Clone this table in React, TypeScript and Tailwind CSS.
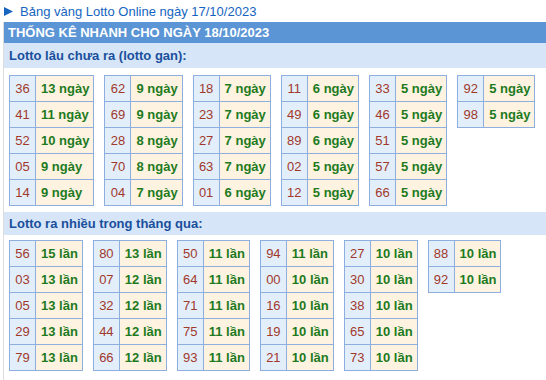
import React from "react";

const gan: [string, string][][] = [
  [["36", "13 ngày"], ["41", "11 ngày"], ["52", "10 ngày"], ["05", "9 ngày"], ["14", "9 ngày"]],
  [["62", "9 ngày"], ["69", "9 ngày"], ["28", "8 ngày"], ["70", "8 ngày"], ["04", "7 ngày"]],
  [["18", "7 ngày"], ["23", "7 ngày"], ["27", "7 ngày"], ["63", "7 ngày"], ["01", "6 ngày"]],
  [["11", "6 ngày"], ["49", "6 ngày"], ["89", "6 ngày"], ["02", "5 ngày"], ["12", "5 ngày"]],
  [["33", "5 ngày"], ["46", "5 ngày"], ["51", "5 ngày"], ["57", "5 ngày"], ["66", "5 ngày"]],
  [["92", "5 ngày"], ["98", "5 ngày"]],
];

const nhieu: [string, string][][] = [
  [["56", "15 lần"], ["03", "13 lần"], ["05", "13 lần"], ["29", "13 lần"], ["79", "13 lần"]],
  [["80", "13 lần"], ["07", "12 lần"], ["32", "12 lần"], ["44", "12 lần"], ["66", "12 lần"]],
  [["50", "11 lần"], ["64", "11 lần"], ["71", "11 lần"], ["75", "11 lần"], ["93", "11 lần"]],
  [["94", "11 lần"], ["00", "10 lần"], ["16", "10 lần"], ["19", "10 lần"], ["21", "10 lần"]],
  [["27", "10 lần"], ["30", "10 lần"], ["38", "10 lần"], ["65", "10 lần"], ["73", "10 lần"]],
  [["88", "10 lần"], ["92", "10 lần"]],
];

function Tbl({ rows }: { rows: [string, string][] }) {
  return (
    <div className="flex flex-col border-l border-t border-[#8eaee0] mr-[10px]">
      {rows.map(([n, v], i) => (
        <div key={i} className="flex h-[26px]">
          <div className="w-[26px] shrink-0 border-r border-b border-[#8eaee0] bg-[#e3eefb] text-[#a0392b] flex items-center justify-center">
            {n}
          </div>
          <div className="flex-1 border-r border-b border-[#8eaee0] bg-[#fdf3e0] text-[#1e7a1e] font-bold pl-[5px] pr-[4px] flex items-center whitespace-nowrap">
            {v}
          </div>
        </div>
      ))}
    </div>
  );
}

export default function App() {
  return (
    <div
      className="w-[546px] h-[380px] bg-white overflow-hidden text-[13px] leading-none"
      style={{ fontFamily: '"Liberation Sans", Arial, sans-serif' }}
    >
      <div className="h-[22px] flex items-center pl-[4px] text-[#1565c0] text-[13px]">
        <svg width="9" height="9" viewBox="0 0 9 9" className="mr-[7px]">
          <path d="M0 0 L9 4.5 L0 9 Z" fill="#1565c0" />
        </svg>
        <span>Bảng vàng Lotto Online ngày 17/10/2023</span>
      </div>
      <div className="ml-[3px] border-l border-[#dcdcdc] h-[358px]">
        <div className="h-[21px] bg-[#5b95d5] text-white font-bold text-[13px] flex items-center pl-[4px]">
          THỐNG KÊ NHANH CHO NGÀY 18/10/2023
        </div>
        <div className="h-[25px] bg-[#d6e6f8] text-[#1a4f9c] font-bold text-[13px] flex items-center pl-[5px]">
          Lotto lâu chưa ra (lotto gan):
        </div>
        <div className="flex items-start pl-[5px] pt-[7px]">
          {gan.map((r, i) => (
            <Tbl key={i} rows={r} />
          ))}
        </div>
        <div className="h-[23px] mt-[6px] bg-[#d6e6f8] text-[#1a4f9c] font-bold text-[13px] flex items-center pl-[5px]">
          Lotto ra nhiều trong tháng qua:
        </div>
        <div className="flex items-start pl-[5px] pt-[5px]">
          {nhieu.map((r, i) => (
            <Tbl key={i} rows={r} />
          ))}
        </div>
      </div>
    </div>
  );
}
